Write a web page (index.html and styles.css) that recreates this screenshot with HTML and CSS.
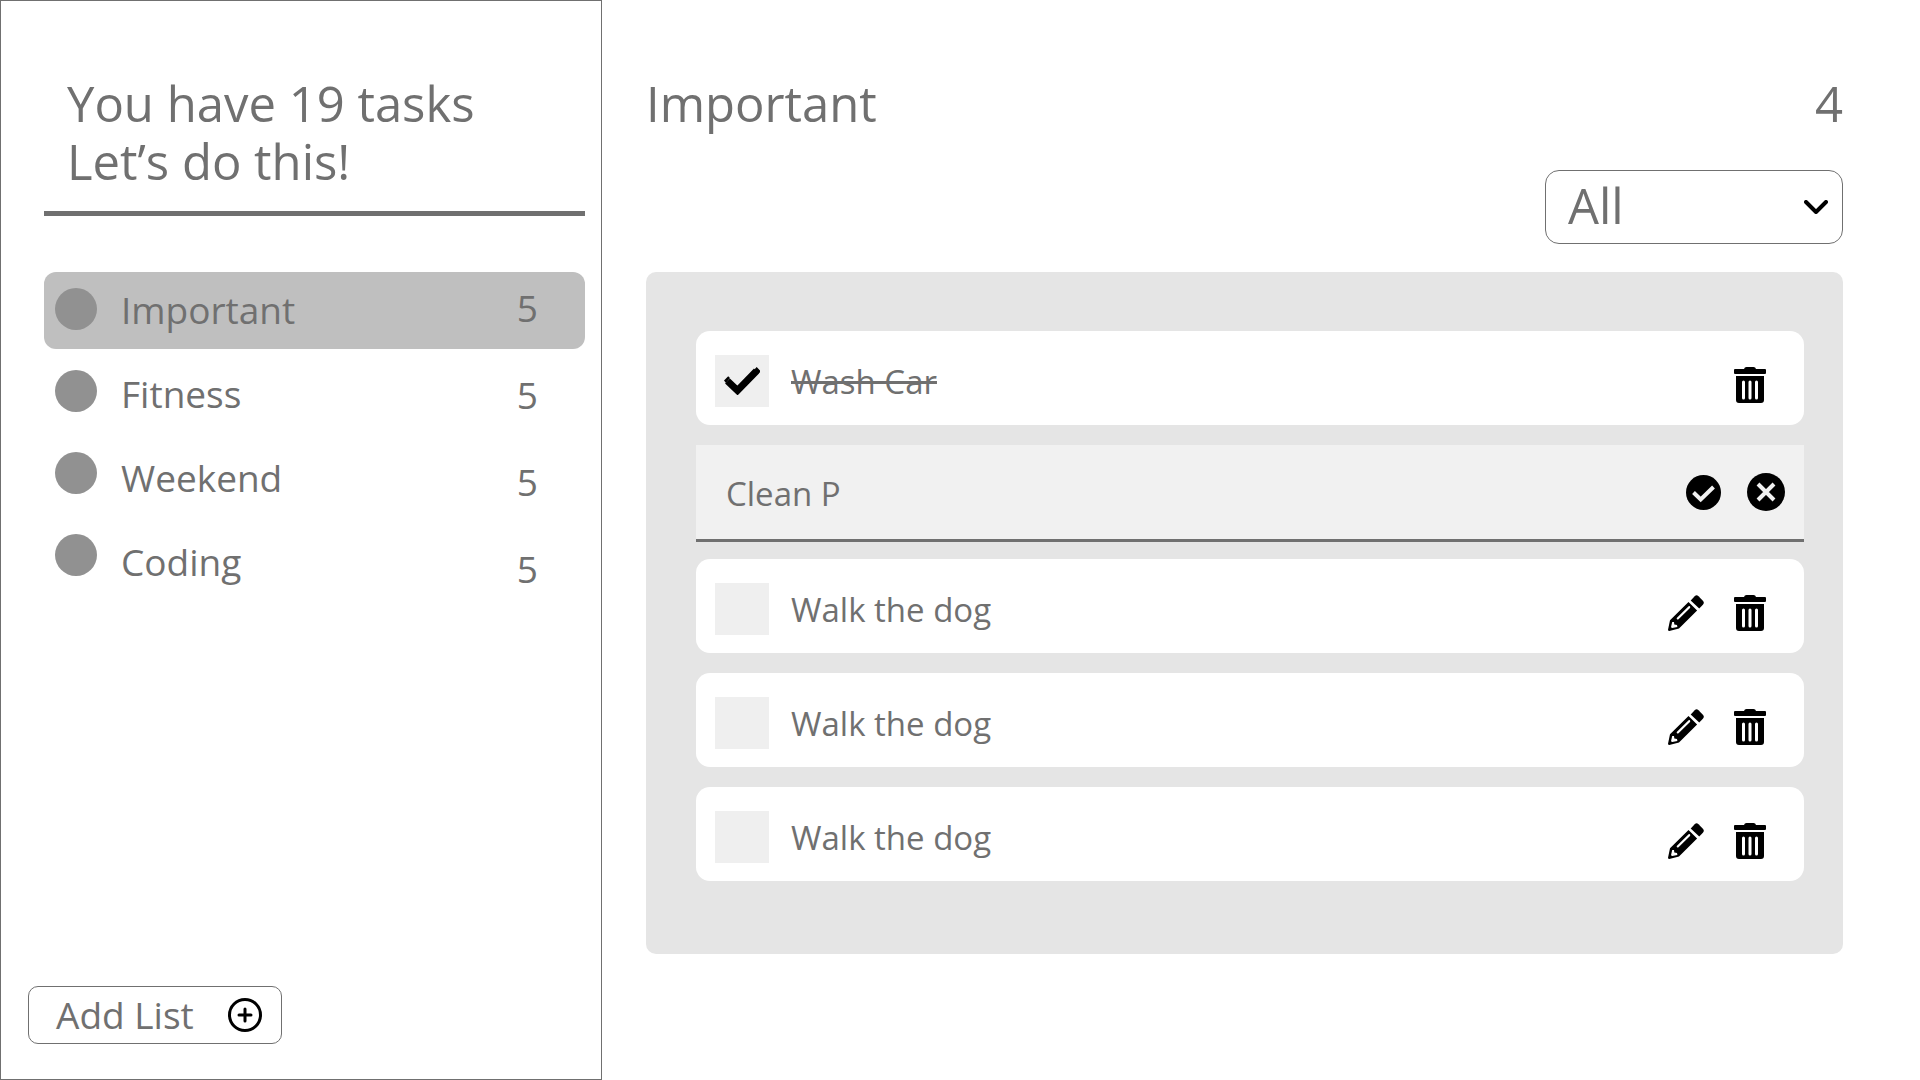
FILE: index.html
```html
<!DOCTYPE html>
<html lang="en">
<head>
<meta charset="utf-8">
<meta name="viewport" content="width=device-width, initial-scale=1">
<title>Tasks</title>
<link rel="stylesheet" href="styles.css">
</head>
<body>
<svg class="sprite" aria-hidden="true">
  <symbol id="trash" viewBox="0 0 32 36">
    <path d="M10 2Q10.500 0 12.500 0H19.500Q21.500 0 22 2H31Q32 2 32 3V6Q32 7 31 7H1Q0 7 0 6V3Q0 2 1 2Z"/>
    <path fill-rule="evenodd" d="M2 9H30V33Q30 36 27 36H5Q2 36 2 33ZM9.500 13.500Q8 13.500 8 15V31Q8 32.500 9.500 32.500T11 31V15Q11 13.500 9.500 13.500ZM16 13.500Q14.500 13.500 14.500 15V31Q14.500 32.500 16 32.500T17.500 31V15Q17.500 13.500 16 13.500ZM22.500 13.500Q21 13.500 21 15V31Q21 32.500 22.500 32.500T24 31V15Q24 13.500 22.500 13.500Z"/>
  </symbol>
  <symbol id="pencil" viewBox="0 0 36 36">
    <path d="M22.700 5.400L26.700 1.200Q28.500-.600 30.500 1.200L34.900 5.700Q36.700 7.800 34.900 9.800L31.200 13.500Z"/>
    <path fill-rule="evenodd" d="M20.500 7L29.100 15.500L11 33.600L1.300 36Q0 36.100 0 34.800L2 25.200ZM20.600 11.300L9 22.700Q8.300 23.500 9 24.200T10.500 24.200L22 12.900Q22.500 12 21.900 11.300T20.600 11.300ZM4.200 27L3 32.200L4.200 33.100L9.400 31.900L9 29.900L6.300 29.400L6 26.900Z"/>
  </symbol>
  <symbol id="check" viewBox="0 0 36 28">
    <path d="M3.500 14L13.500 23.500L32.500 4" fill="none" stroke="currentColor" stroke-width="7" stroke-linejoin="miter"/>
    <path d="M0 13.500L4.200 9.200L6 11L2 16ZM30 3L32.700 0L36 3.500V5.300L34.500 6.800Z"/>
  </symbol>
  <symbol id="check-circle" viewBox="0 0 35 35">
    <circle cx="17.500" cy="17.500" r="17.500"/>
    <path d="M7.500 17.500L14.700 24.500L27.500 12" fill="none" stroke="#f1f1f1" stroke-width="4"/>
  </symbol>
  <symbol id="x-circle" viewBox="0 0 38 38">
    <circle cx="19" cy="19" r="19"/>
    <path d="M11 11L27 27M27 11L11 27" fill="none" stroke="#f1f1f1" stroke-width="4"/>
  </symbol>
</svg>

<div class="app">
  <aside class="sidebar">
    <h1 class="greeting">You have 19 tasks<br>Let’s do this!</h1>
    <nav aria-label="Lists">
      <ul class="lists">
        <li><a class="list-link active" href="#important"><span class="dot"></span><span class="name">Important</span><span class="count">5</span></a></li>
        <li><a class="list-link" href="#fitness"><span class="dot"></span><span class="name">Fitness</span><span class="count">5</span></a></li>
        <li><a class="list-link" href="#weekend"><span class="dot"></span><span class="name">Weekend</span><span class="count">5</span></a></li>
        <li><a class="list-link" href="#coding"><span class="dot"></span><span class="name">Coding</span><span class="count">5</span></a></li>
      </ul>
    </nav>
    <button class="add-list" type="button">
      <span>Add List</span>
      <svg width="34" height="34" viewBox="0 0 34 34" fill="none" stroke="currentColor" stroke-width="3" stroke-linecap="round" aria-hidden="true"><circle cx="17" cy="17" r="15.500"/><path d="M17 11V23M11 17H23"/></svg>
    </button>
  </aside>

  <main class="content">
    <header class="heading">
      <h2>Important</h2>
      <span>4</span>
    </header>

    <div class="filter">
      <select aria-label="Filter tasks"><option>All</option><option>Active</option><option>Done</option></select>
      <svg width="24" height="14" viewBox="0 0 24 14" fill="none" stroke="currentColor" stroke-width="4" stroke-linecap="round" stroke-linejoin="round" aria-hidden="true"><path d="M2 2L12 12L22 2"/></svg>
    </div>

    <ul class="panel">
      <li class="task done">
        <span class="tick"><input type="checkbox" id="task-1" checked><svg width="36" height="28" aria-hidden="true"><use href="#check"/></svg></span>
        <label for="task-1">Wash Car</label>
        <div class="actions">
          <button type="button" aria-label="Delete"><svg width="32" height="36"><use href="#trash"/></svg></button>
        </div>
      </li>
      <li class="edit">
        <input type="text" aria-label="Task name" value="Clean P">
        <button type="button" aria-label="Save"><svg width="35" height="35"><use href="#check-circle"/></svg></button>
        <button type="button" aria-label="Cancel"><svg width="38" height="38"><use href="#x-circle"/></svg></button>
      </li>
      <li class="task">
        <span class="tick"><input type="checkbox" id="task-3"></span>
        <label for="task-3">Walk the dog</label>
        <div class="actions">
          <button type="button" aria-label="Edit"><svg width="36" height="36"><use href="#pencil"/></svg></button>
          <button type="button" aria-label="Delete"><svg width="32" height="36"><use href="#trash"/></svg></button>
        </div>
      </li>
      <li class="task">
        <span class="tick"><input type="checkbox" id="task-4"></span>
        <label for="task-4">Walk the dog</label>
        <div class="actions">
          <button type="button" aria-label="Edit"><svg width="36" height="36"><use href="#pencil"/></svg></button>
          <button type="button" aria-label="Delete"><svg width="32" height="36"><use href="#trash"/></svg></button>
        </div>
      </li>
      <li class="task">
        <span class="tick"><input type="checkbox" id="task-5"></span>
        <label for="task-5">Walk the dog</label>
        <div class="actions">
          <button type="button" aria-label="Edit"><svg width="36" height="36"><use href="#pencil"/></svg></button>
          <button type="button" aria-label="Delete"><svg width="32" height="36"><use href="#trash"/></svg></button>
        </div>
      </li>
    </ul>
  </main>
</div>
</body>
</html>
```
FILE: styles.css
```css
* {
  box-sizing: border-box;
}

body {
  margin: 0;
  background: #fff;
  color: #707070;
  font-family: "Open Sans", "Noto Sans", sans-serif;
}

h1,
h2,
ul {
  margin: 0;
  padding: 0;
  font-weight: 400;
  list-style: none;
}

button,
input,
select {
  margin: 0;
  padding: 0;
  border: 0;
  background: none;
  color: inherit;
  font: inherit;
}

svg {
  display: block;
  color: #000;
}

.sprite {
  display: none;
}

.app {
  display: grid;
  grid-template-columns: 602px 1fr;
  min-height: 100vh;
}

/* Sidebar */

.sidebar {
  display: flex;
  flex-direction: column;
  padding: 73px 16px 35px 27px;
  border: 1px solid #707070;
}

.greeting {
  margin-left: 16px;
  padding: 0 0 21px 23px;
  border-bottom: 5px solid #707070;
  font-size: 49px;
  line-height: 58px;
}

.lists {
  display: flex;
  flex-direction: column;
  gap: 5px;
  margin: 56px 0 0 16px;
}

.list-link {
  --step: 0;
  display: flex;
  align-items: flex-start;
  height: 77px;
  padding: 12px 47px 0 11px;
  border-radius: 12px;
  color: inherit;
  font-size: 37px;
  line-height: 48px;
  text-decoration: none;
}

.list-link.active {
  background: #bfbfbf;
}

/* Names and counts run on a looser rhythm than the dots */
li:nth-child(2) .list-link { --step: 1; }
li:nth-child(3) .list-link { --step: 2; }
li:nth-child(4) .list-link { --step: 3; }

.dot {
  width: 42px;
  height: 42px;
  margin-top: 4px;
  border-radius: 50%;
  background: #919191;
}

.name {
  flex: 1;
  margin-left: 24px;
  padding-top: calc(2px + var(--step) * 2px);
}

.count {
  padding-top: calc(var(--step) * 5px);
}

.add-list {
  display: flex;
  align-items: center;
  justify-content: space-between;
  width: 254px;
  height: 58px;
  margin-top: auto;
  padding: 0 19px 0 27px;
  border: 1px solid #707070;
  border-radius: 10px;
  font-size: 37px;
  line-height: 48px;
}

/* Main column */

.content {
  display: flex;
  flex-direction: column;
  padding: 74px 77px 48px 44px;
}

.heading {
  display: flex;
  justify-content: space-between;
  font-size: 49px;
  line-height: 58px;
}

.heading h2 {
  font-size: inherit;
}

.filter {
  display: grid;
  align-items: center;
  align-self: flex-end;
  width: 298px;
  margin: 38px 0 28px;
}

.filter > * {
  grid-area: 1 / 1;
}

.filter select {
  appearance: none;
  height: 74px;
  padding: 0 48px 5px 22px;
  border: 1px solid #707070;
  border-radius: 14px;
  font-size: 49px;
  line-height: 58px;
}

.filter svg {
  justify-self: end;
  margin-right: 15px;
  pointer-events: none;
}

.panel {
  display: flex;
  flex-direction: column;
  gap: 20px;
  padding: 59px 39px 73px 50px;
  border-radius: 10px;
  background: #e5e5e5;
  font-size: 33px;
  line-height: 40px;
}

.task {
  display: flex;
  align-items: center;
  height: 94px;
  padding: 6px 38px 0 19px;
  border-radius: 14px;
  background: #fff;
}

.tick {
  display: grid;
  place-items: center;
}

.tick > * {
  grid-area: 1 / 1;
}

.tick svg {
  pointer-events: none;
}

.tick input {
  appearance: none;
  width: 54px;
  height: 52px;
  background: #efefef;
}

.task label {
  flex: 1;
  margin-left: 22px;
  padding-top: 2px;
}

.done label {
  text-decoration: line-through;
  text-decoration-thickness: 3px;
}

.actions {
  display: flex;
  gap: 30px;
  padding-top: 8px;
}

.edit {
  display: flex;
  align-items: center;
  gap: 26px;
  height: 94px;
  padding: 0 19px 0 30px;
  background: #f1f1f1;
  box-shadow: 0 3px 0 #707070;
}

.edit input {
  flex: 1;
  min-width: 0;
  padding-top: 3px;
  outline: 0;
}
```
